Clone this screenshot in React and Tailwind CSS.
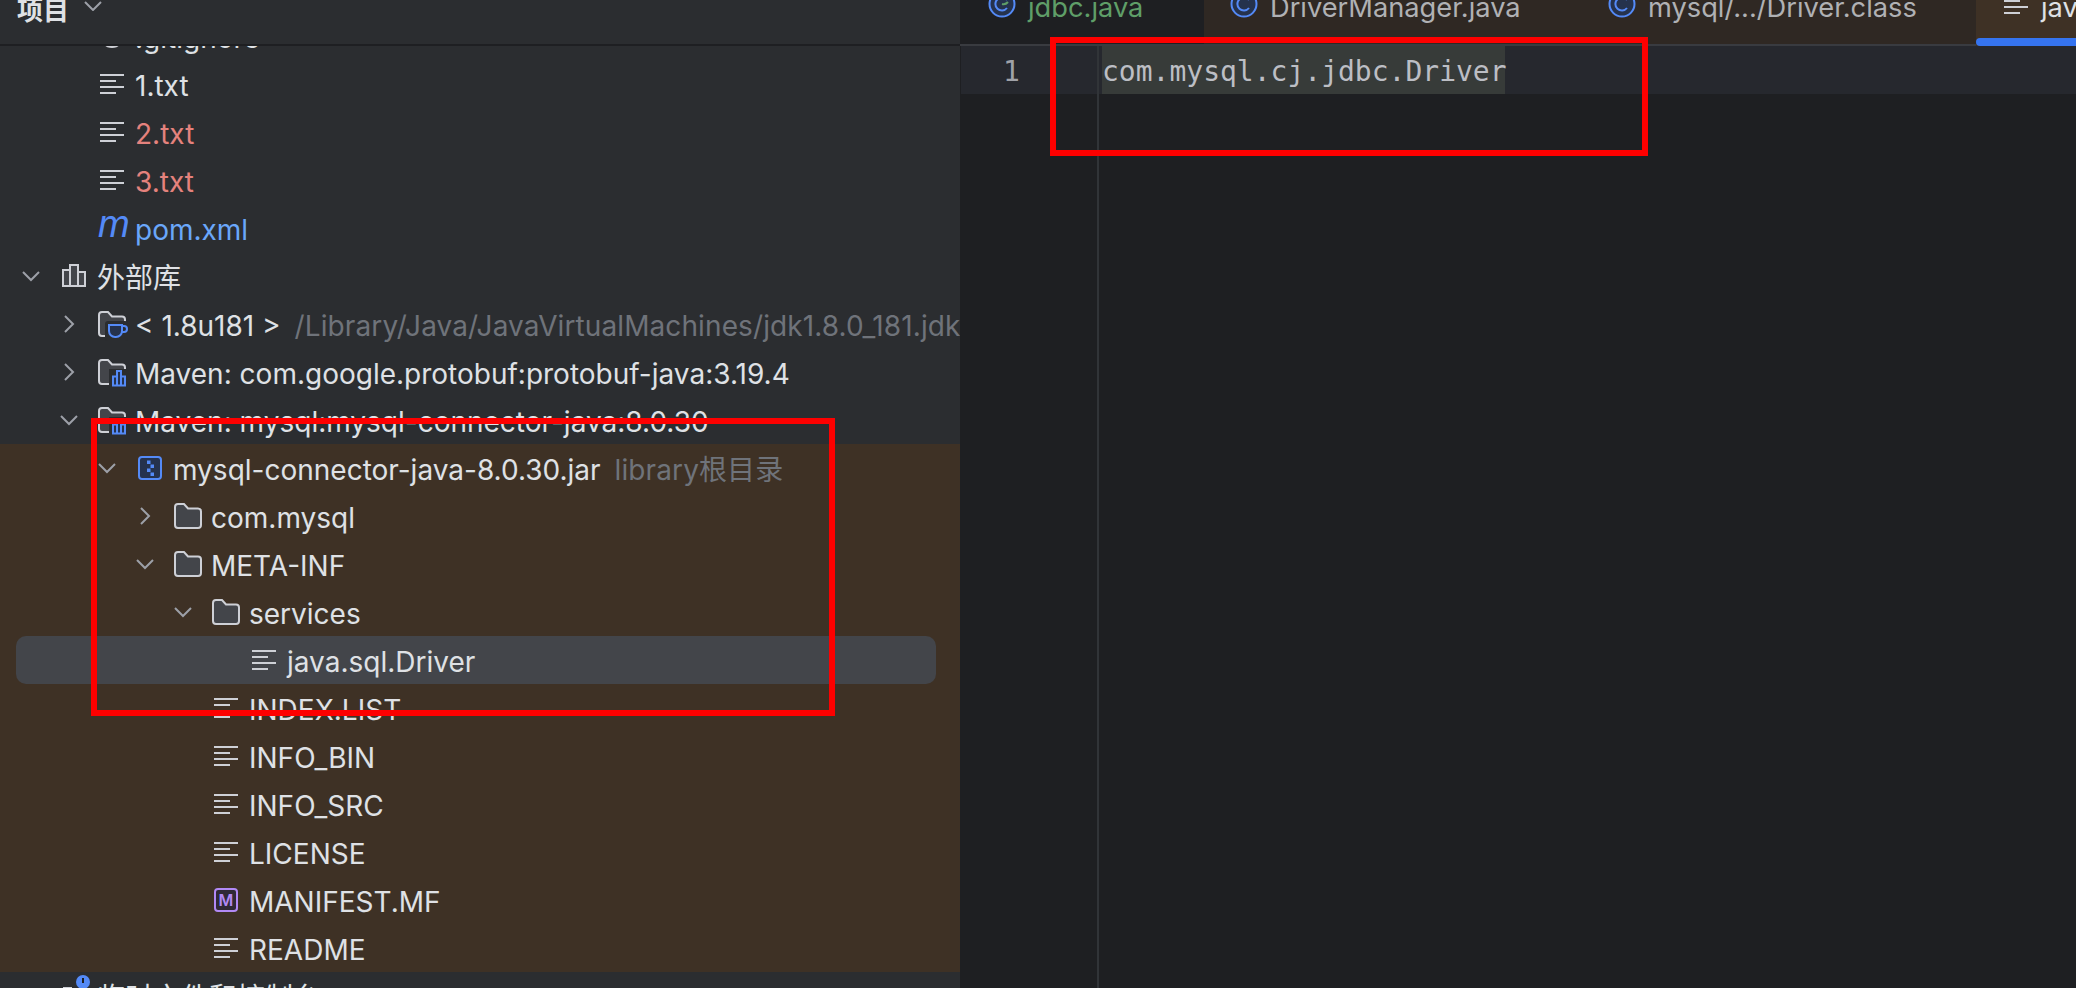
const BLUE = "#548af7";
const indent = ["pl-[20px]", "pl-[58px]", "pl-[96px]", "pl-[134px]", "pl-[172px]", "pl-[210px]"];

function Chevron({ open }) {
  return (
    <svg width="22" height="22" viewBox="0 0 22 22" fill="none" stroke="#9da0a8" strokeWidth="2">
      {open ? <path d="M3 7l8 8 8-8" /> : <path d="M7 3l8 8-8 8" />}
    </svg>
  );
}

function LinesIcon({ color = "#ced0d6" }) {
  return (
    <svg width="28" height="28" viewBox="0 0 28 28" fill="none" stroke={color} strokeWidth="2">
      <path d="M2 5h24M2 11h16M2 17h24M2 23h16" />
    </svg>
  );
}

const folderPath = "M1 5a3 3 0 0 1 3-3h6l4 4.5h10a3 3 0 0 1 3 3V23a3 3 0 0 1-3 3H4a3 3 0 0 1-3-3z";

function FolderIcon() {
  return (
    <svg width="28" height="28" viewBox="0 0 28 28" fill="#43454a" stroke="#ced0d6" strokeWidth="2">
      <path d={folderPath} />
    </svg>
  );
}

function LibFolderIcon() {
  return (
    <svg width="28" height="30" viewBox="0 0 28 30" fill="none" className="overflow-visible">
      <path d={folderPath} fill="#43454a" stroke="#ced0d6" strokeWidth="2" />
      <rect x="11" y="11" width="19" height="20" fill="#2b2d30" />
      <path d="M15 27.5v-9h4v9zM19 27.5V13h4v14.5zM23 27.5v-9h4v9z" fill="#25324d" stroke={BLUE} strokeWidth="2" />
    </svg>
  );
}

function JdkFolderIcon() {
  return (
    <svg width="28" height="30" viewBox="0 0 28 30" fill="none" className="overflow-visible">
      <path d={folderPath} fill="#43454a" stroke="#ced0d6" strokeWidth="2" />
      <rect x="7" y="11" width="23" height="20" rx="3" fill="#2b2d30" />
      <path d="M11 15h13v6a6 6 0 0 1-6 6h-1a6 6 0 0 1-6-6z" fill="#25324d" stroke={BLUE} strokeWidth="2" />
      <path d="M24 16h2a3 3 0 0 1 0 6h-2" stroke={BLUE} strokeWidth="2" />
    </svg>
  );
}

function JarIcon() {
  return (
    <svg width="28" height="28" viewBox="0 0 28 28" fill="none">
      <rect x="3" y="3" width="22" height="22" rx="3" fill="#25324d" stroke={BLUE} strokeWidth="2" />
      <path d="M11 6.5h3.5v3.5h-3.5zM14.5 10.5h3.5v3.5h-3.5zM11 14.5h3.5v3.5h-3.5zM14.5 18.5h3.5v3.5h-3.5z" fill={BLUE} />
    </svg>
  );
}

function ManifestIcon() {
  return (
    <svg width="28" height="28" viewBox="0 0 28 28" fill="none">
      <rect x="3" y="3" width="22" height="22" rx="3" fill="#2f2936" stroke="#b189f5" strokeWidth="2" />
      <text x="14" y="20" textAnchor="middle" fontSize="16" fontWeight="600" fill="#b189f5" fontFamily="Inter, sans-serif">M</text>
    </svg>
  );
}

function IgnoredIcon() {
  return (
    <svg width="28" height="28" viewBox="0 0 28 28" fill="none" stroke="#ced0d6" strokeWidth="2">
      <circle cx="14" cy="14" r="11" />
      <path d="M6.5 6.5l15 15" />
    </svg>
  );
}

function ScratchIcon() {
  return (
    <svg width="28" height="28" viewBox="0 0 28 28" fill="none" className="overflow-visible">
      <path d="M3 6h9" stroke="#ced0d6" strokeWidth="2" />
      <circle cx="23" cy="0" r="7" fill={BLUE} />
      <path d="M23 -4v5" stroke="#1e1f22" strokeWidth="2" />
    </svg>
  );
}

function ClassIcon({ mark }) {
  return (
    <svg width="28" height="28" viewBox="0 0 28 28" fill="none" stroke={BLUE} strokeWidth="2">
      <circle cx="14" cy="14" r="12.5" fill="#25324d" />
      <path d="M19 10a6.5 6.5 0 1 0 0 8" />
      {mark && <path d="M14 14a6 6 0 0 0 6-2" stroke="#5f9e68" />}
    </svg>
  );
}

function PomIcon() {
  return (
    <span className="block w-7 text-center leading-7 text-[38px] italic text-[#548af7] [font-family:'Liberation_Sans',sans-serif] -translate-y-[4px]">
      m
    </span>
  );
}

function Row({ level, open, icon, color = "text-[#dfe1e5]", hint, children }) {
  return (
    <div className={`flex items-center h-12 shrink-0 whitespace-nowrap overflow-hidden ${indent[level]}`}>
      <div className="w-[22px] h-[22px] mr-[18px] shrink-0">
        {open !== undefined && <Chevron open={open} />}
      </div>
      <div className="w-7 h-7 mr-[9px] shrink-0">{icon}</div>
      <span className={`${color} pt-[3px]`}>{children}</span>
      {hint && <span className="ml-[14px] pt-[3px] tracking-[0.1px] text-[#6f737a]">{hint}</span>}
    </div>
  );
}

function Tab({ width, pad, icon, color, children }) {
  return (
    <div className={`flex items-start h-[46px] shrink-0 border-b-2 border-[#393b40] overflow-hidden ${width} ${pad} ${color}`}>
      <div className="w-7 h-7 -mt-[10px] mr-3 shrink-0">{icon}</div>
      <span className="leading-[14px] pt-[1px]">{children}</span>
    </div>
  );
}

export default function App() {
  return (
    <div className="relative flex w-[2076px] h-[988px] overflow-hidden bg-[#1e1f22] text-[28px] [font-family:Inter,'Noto_Sans_CJK_SC',sans-serif]">
      {/* PROJECT TREE */}
      <div className="flex flex-col w-[960px] h-full overflow-hidden bg-[#2b2d30]">
        <div className="flex items-start h-[46px] shrink-0 pl-[17px] border-b-2 border-[#1e1f22] bg-[#2b2d30] relative z-10">
          <span className="leading-[22px] text-[26px] font-semibold text-[#dfe1e5]">项目</span>
          <svg width="18" height="10" viewBox="0 0 18 10" fill="none" stroke="#9da0a8" strokeWidth="2" className="ml-[15px] mt-[1px]">
            <path d="M1 1l8 8 8-8" />
          </svg>
        </div>
        <div className="flex flex-col -mt-[34px]">
          <Row level={1} icon={<IgnoredIcon />}>.gitignore</Row>
          <Row level={1} icon={<LinesIcon />}>1.txt</Row>
          <Row level={1} icon={<LinesIcon />} color="text-[#e5827d]">2.txt</Row>
          <Row level={1} icon={<LinesIcon />} color="text-[#e5827d]">3.txt</Row>
          <Row level={1} icon={<PomIcon />} color="text-[#6aa7fa]">pom.xml</Row>
          <div className="flex items-center h-12 shrink-0 pl-[20px]">
            <div className="w-[22px] h-[22px] mr-[18px]"><Chevron open /></div>
            <svg width="28" height="28" viewBox="0 0 28 28" fill="#43454a" stroke="#ced0d6" strokeWidth="2" className="mr-[9px]">
              <path d="M3 8h7v16H3zM10 3h8v21h-8zM18 10h7v14h-7z" />
            </svg>
            <span className="text-[#dfe1e5] pt-[4px]">外部库</span>
          </div>
          <Row level={1} open={false} icon={<JdkFolderIcon />} hint="/Library/Java/JavaVirtualMachines/jdk1.8.0_181.jdk">{"< 1.8u181 >"}</Row>
          <Row level={1} open={false} icon={<LibFolderIcon />}>Maven: com.google.protobuf:protobuf-java:3.19.4</Row>
          <Row level={1} open icon={<LibFolderIcon />}>Maven: mysql:mysql-connector-java:8.0.30</Row>
          <div className="flex flex-col bg-[#3e3125]">
            <Row level={2} open icon={<JarIcon />} hint="library根目录">mysql-connector-java-8.0.30.jar</Row>
            <Row level={3} open={false} icon={<FolderIcon />}>com.mysql</Row>
            <Row level={3} open icon={<FolderIcon />}>META-INF</Row>
            <Row level={4} open icon={<FolderIcon />}>services</Row>
            <div className="h-12 shrink-0 pl-4 pr-6">
              <div className="flex items-center h-12 pl-[194px] rounded-[10px] bg-[#43454a]">
                <div className="w-[22px] h-[22px] mr-[18px] shrink-0" />
                <div className="w-7 h-7 mr-[9px] shrink-0"><LinesIcon /></div>
                <span className="text-[#dfe1e5] pt-[3px]">java.sql.Driver</span>
              </div>
            </div>
            <Row level={4} icon={<LinesIcon />}>INDEX.LIST</Row>
            <Row level={4} icon={<LinesIcon />}>INFO_BIN</Row>
            <Row level={4} icon={<LinesIcon />}>INFO_SRC</Row>
            <Row level={4} icon={<LinesIcon />}>LICENSE</Row>
            <Row level={4} icon={<ManifestIcon />}>MANIFEST.MF</Row>
            <Row level={4} icon={<LinesIcon />}>README</Row>
          </div>
          <div className="flex items-center h-12 shrink-0 pl-[60px]">
            <div className="w-7 h-7 mr-[9px]"><ScratchIcon /></div>
            <span className="text-[#dfe1e5] pt-[4px]">临时文件和控制台</span>
          </div>
        </div>
      </div>

      {/* EDITOR */}
      <div className="flex flex-col flex-1 min-w-0">
        <div className="flex h-[46px] shrink-0 text-[27.25px]">
          <Tab width="w-[244px]" pad="pl-[28px]" color="text-[#5f9e68] bg-[#1e1f22]" icon={<ClassIcon mark />}>jdbc.java</Tab>
          <Tab width="w-[362px]" pad="pl-[26px]" color="text-[#b0b1b4] bg-[#2f2823]" icon={<ClassIcon />}>DriverManager.java</Tab>
          <Tab width="w-[410px]" pad="pl-[42px]" color="text-[#b0b1b4] bg-[#2f2823]" icon={<ClassIcon />}>mysql/.../Driver.class</Tab>
          <div className="relative flex items-start flex-1 h-[46px] pl-[26px] overflow-hidden bg-[#3e3125] text-[#dfe1e5]">
            <div className="w-7 h-7 -mt-[10px] mr-[11px] shrink-0"><LinesIcon /></div>
            <span className="leading-[14px] pt-[1px]">java.sql.Driver</span>
            <div className="absolute left-0 right-0 bottom-0 h-2 rounded-l-[4px] bg-[#3574f0]" />
          </div>
        </div>
        <div className="flex flex-1 text-[28px] [font-family:'DejaVu_Sans_Mono',monospace]">
          <div className="w-[139px] shrink-0 border-r-2 border-[#313438]">
            <div className="h-12 pl-[42px] ml-[1px] pt-[2px] leading-[48px] bg-[#26282e] text-[#a0a2a8]">1</div>
          </div>
          <div className="flex-1">
            <div className="h-12 pl-[3px] bg-[#26282e]">
              <span className="block w-[403px] h-12 pt-[2px] leading-[48px] bg-[#373b39] text-[#bcbec4]">com.mysql.cj.jdbc.Driver</span>
            </div>
          </div>
        </div>
      </div>

      {/* RED ANNOTATIONS */}
      <div className="absolute left-[91px] top-[418px] w-[744px] h-[298px] border-[6px] border-[#fe0000]" />
      <div className="absolute left-[1050px] top-[37px] w-[598px] h-[119px] border-[6px] border-[#fe0000]" />
    </div>
  );
}
